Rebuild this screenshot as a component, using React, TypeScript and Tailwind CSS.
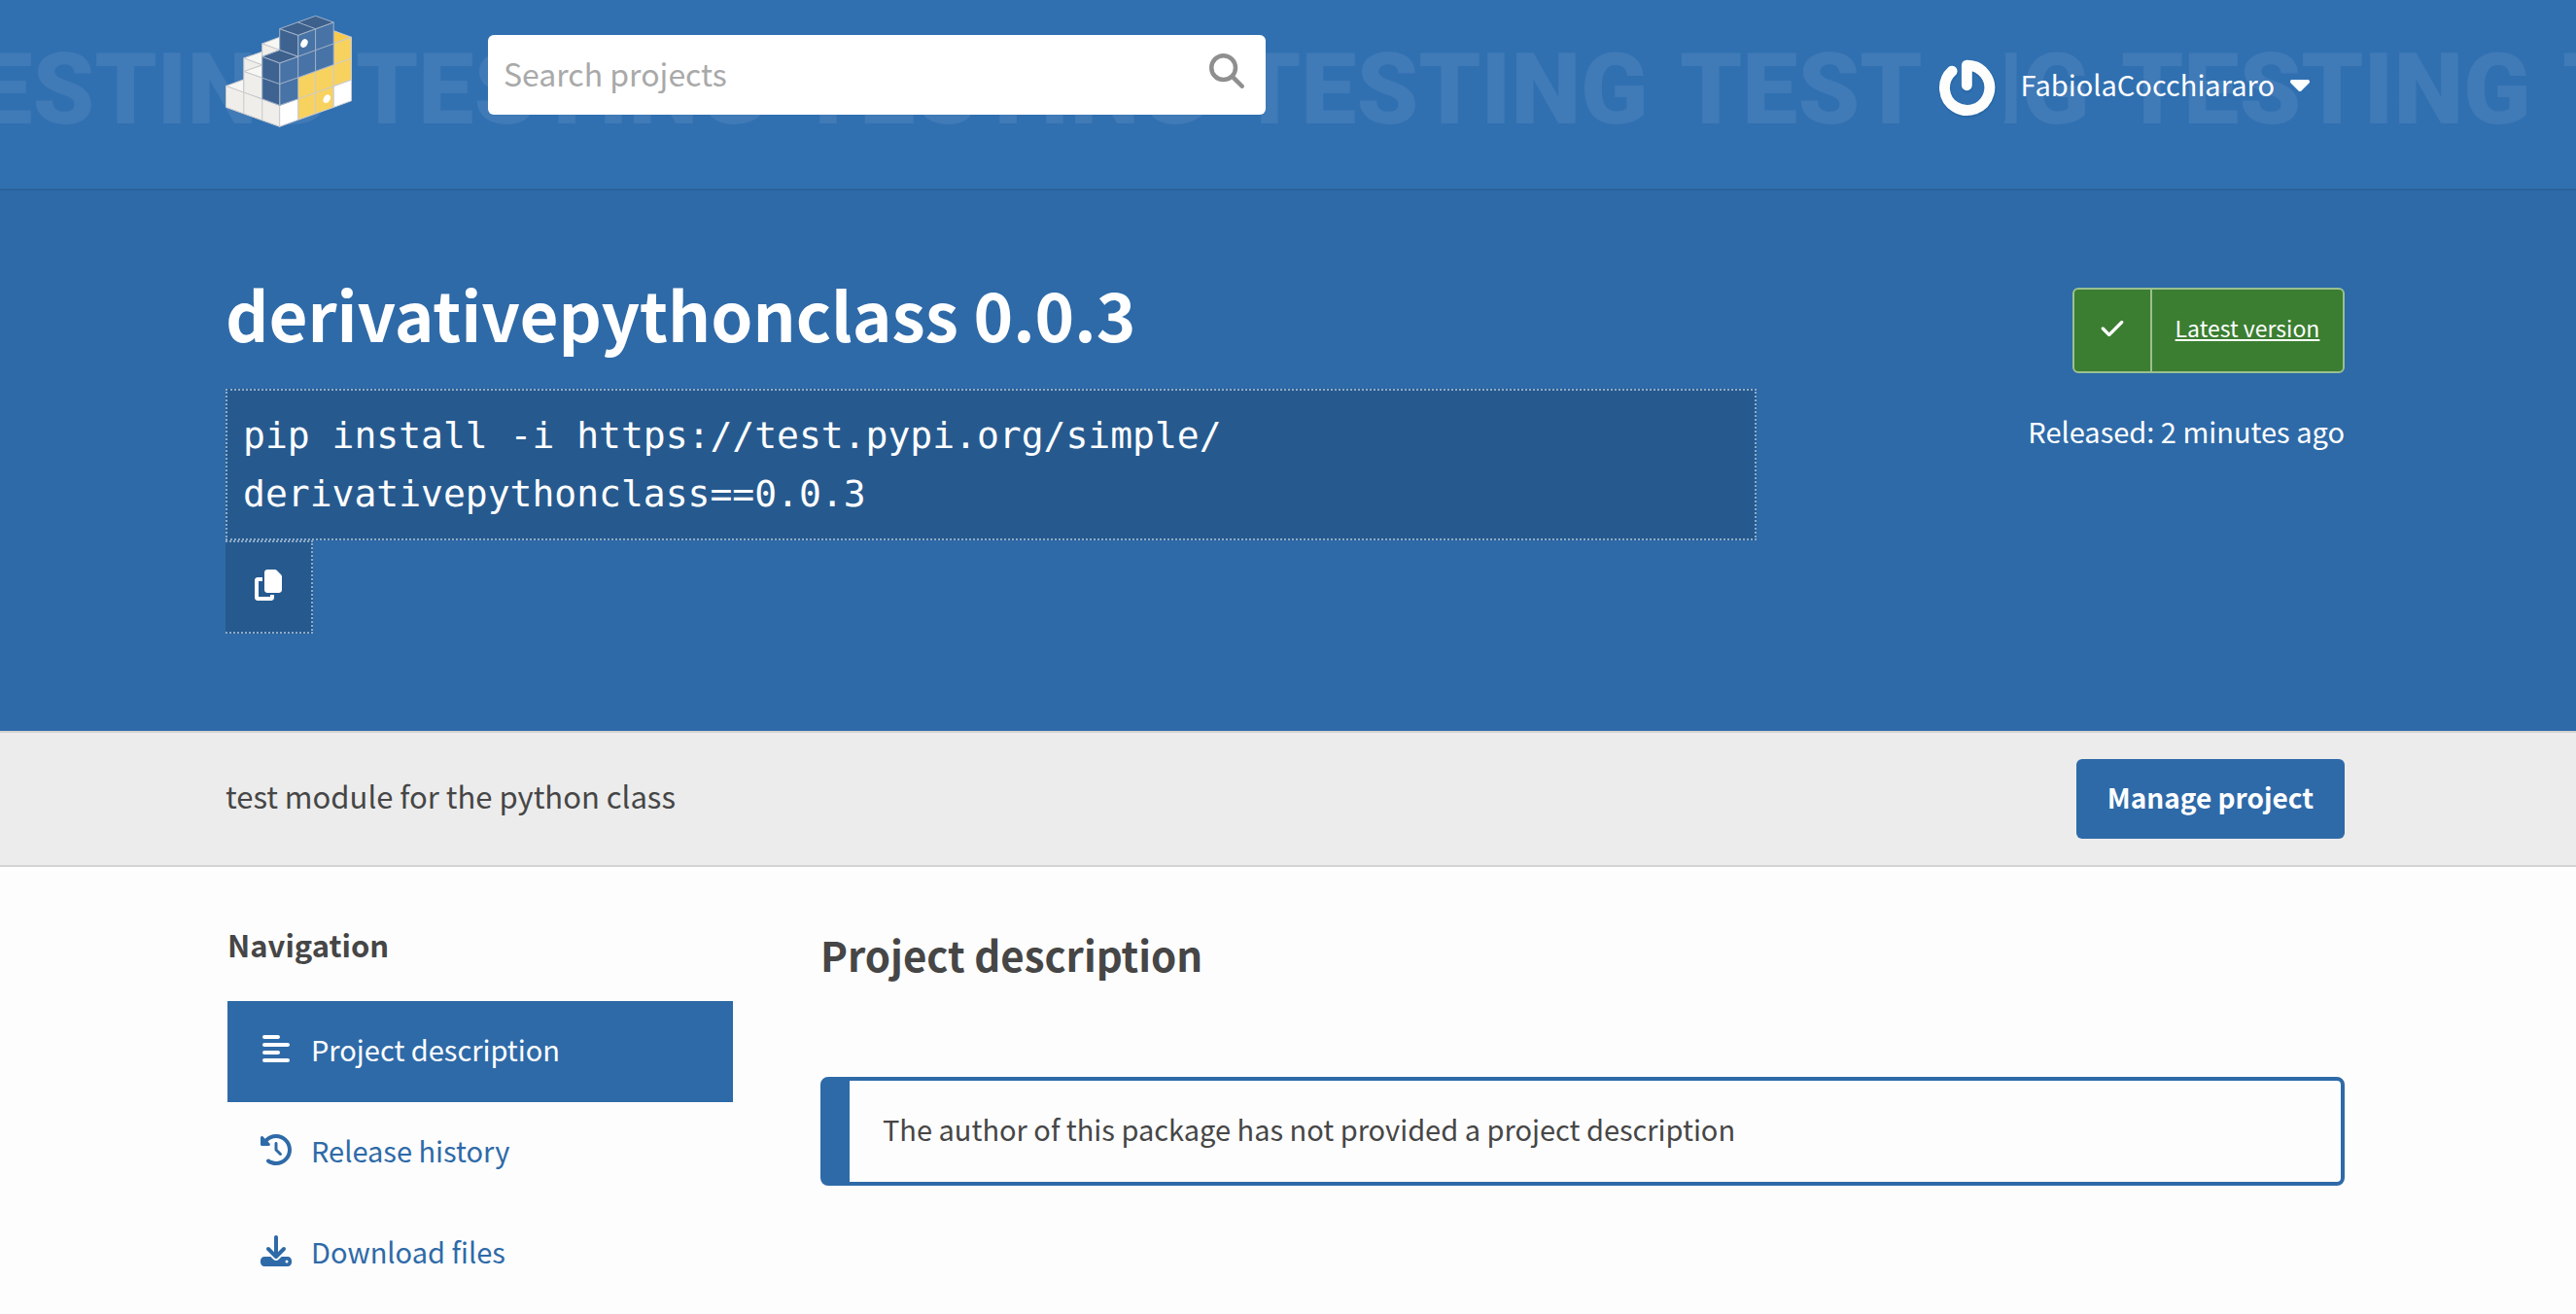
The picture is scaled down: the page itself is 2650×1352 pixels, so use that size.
import type { ReactNode } from "react";
import {
  FaAlignLeft,
  FaCaretDown,
  FaCheck,
  FaClockRotateLeft,
  FaCopy,
  FaDownload,
  FaMagnifyingGlass,
} from "react-icons/fa6";

function Container({ className, children }: { className: string; children: ReactNode }) {
  return (
    <div className="px-8 pr-[38px]">
      <div className={`mx-auto w-full max-w-[2180px] ${className}`}>{children}</div>
    </div>
  );
}

function Logo() {
  return (
    <svg viewBox="96 48 390 346" className="h-[115px] w-[130px]" strokeWidth="3" strokeLinejoin="round" aria-hidden="true">
      {/* white steps on the left */}
      <g stroke="#c9c9cd">
        <path fill="#f7f7f4" d="M209 135 263 115V155Z M152 180 209 160V201Z M152 221 209 201V241Z M97 266 152 246V287Z" />
        <path fill="#efeeea" d="M209 135 263 155 209 175Z M152 180 209 201 152 221Z" />
        <path fill="#efeeea" d="M152 221 209 241V306L152 287Z" />
        <path fill="#efeeea" d="M97 266 263 326V392L97 332Z" />
        <path fill="none" d="M152 287V352 M209 306V372" />
      </g>
      {/* right face */}
      <g stroke="#c9cbd2">
        <path fill="#f9cb4b" d="M430 95 485 115 430 135Z" />
        <path fill="#f8d25f" d="M320 240 430 200V135L485 115V247L430 267V332L320 371Z" />
        <path fill="#ffffff" d="M263 326 320 306V371L263 392Z M430 267 485 247V312L430 332Z" />
        <path fill="none" d="M320 306 430 267 M430 200 485 180 M374 220V352 M430 200V267" />
      </g>
      {/* blue blocks */}
      <g stroke="#a3b4ca">
        <path fill="#4873a6" d="M263 195 320 175V109L430 69V200L320 240V306L263 326Z" />
        <path fill="#3e6391" d="M209 175 263 195V326L209 306Z M263 89 320 109V175L263 155Z" />
        <path fill="#3d608c" d="M209 175 263 155 320 175 263 195Z M263 89 374 49 430 69 320 109Z" />
        <path fill="none" d="M320 69 374 89V220 M320 175V240 M209 241 263 260 320 240 M320 175 430 135" />
      </g>
      <ellipse cx="339" cy="134" rx="10" ry="14" fill="#fff" transform="rotate(28 339 134)" />
      <ellipse cx="409" cy="306" rx="10" ry="14" fill="#fff" transform="rotate(28 409 306)" />
    </svg>
  );
}

function Avatar() {
  return (
    <svg viewBox="28 28 242 242" className="size-20 rounded-lg bg-[#3070b1]" fill="none" strokeWidth="33" strokeLinecap="round" strokeLinejoin="round" aria-hidden="true">
      <path d="M150 142V80A70 70 0 1 1 104 98" stroke="#1f5a93" strokeOpacity="0.3" strokeWidth="39" transform="translate(1 4)" />
      <path d="M150 142V80A70 70 0 1 1 104 98" stroke="#fdfdfb" />
    </svg>
  );
}

const navItems = [
  { label: "Project description", Icon: FaAlignLeft, active: true },
  { label: "Release history", Icon: FaClockRotateLeft, active: false },
  { label: "Download files", Icon: FaDownload, active: false },
];

export default function App() {
  return (
    <div className="min-h-screen bg-[#fdfdfd] font-['Noto_Sans_CJK_JP','Noto_Sans',sans-serif] text-[29px] leading-[40px] text-[#464646]">
      <header className="relative overflow-hidden border-b-2 border-[#2a6299] bg-[#3070b1]">
        <div
          aria-hidden="true"
          className="absolute inset-x-0 top-0 -ml-[88px] flex h-[184px] items-center font-['Roboto',sans-serif] text-[102px] leading-none font-black text-[#407ab7] select-none"
        >
          {[0, 1, 2, 3, 4, 5, 6].map((n) => (
            <span key={n} className="w-[454px] shrink-0">TESTING</span>
          ))}
        </div>
        <div className="relative">
          <Container className="flex h-[194px] items-start pt-4">
            <a href="#" aria-label="PyPI home" className="mr-[140px] shrink-0">
              <Logo />
            </a>
            <form className="mt-5 flex h-[82px] max-w-[800px] flex-1 rounded-md bg-white" onSubmit={(e) => e.preventDefault()}>
              <label htmlFor="search" className="sr-only">Search PyPI</label>
              <input
                id="search"
                type="search"
                placeholder="Search projects"
                className="min-w-0 flex-1 bg-transparent pb-1 pl-4 text-[32px] outline-none placeholder:text-[#a9a9a9]"
              />
              <button type="submit" aria-label="Search" className="px-[22px] pb-2 text-[36px] text-[#8f8f8f]">
                <FaMagnifyingGlass />
              </button>
            </form>
            <button type="button" className="mt-[34px] mr-9 ml-auto flex items-center text-white">
              <Avatar />
              <span className="flex items-center gap-4 pb-2 pl-4">
                FabiolaCocchiararo
                <FaCaretDown className="h-8 w-5" />
              </span>
            </button>
          </Container>
        </div>
      </header>

      <section className="bg-[#2e6aa8] pt-[84px] pb-[100px] text-white">
        <Container className="flex justify-between gap-8">
          <div className="max-w-[1575px] flex-1">
            <h1 className="mb-9 text-[69px] leading-[84px] font-bold">derivativepythonclass 0.0.3</h1>
            <p className="border-2 border-dotted border-[#8fabc8] bg-[#265a8f] p-4 font-['DejaVu_Sans_Mono',monospace] text-[38px] leading-[60px]">
              pip install -i https://test.pypi.org/simple/ derivativepythonclass==0.0.3
            </p>
            <button
              type="button"
              aria-label="Copy PIP instructions"
              className="flex h-[96px] w-[90px] items-center justify-center border-2 border-l-0 border-dotted border-[#8fabc8] bg-[#265a8f] pb-1 text-[32px]"
            >
              <FaCopy />
            </button>
          </div>
          <div className="flex shrink-0 flex-col items-end pt-4">
            <a href="#" className="flex h-[88px] w-[280px] rounded-md border-2 border-[#9bc08f] bg-[#3b7e31] text-[23px]">
              <span className="flex w-20 items-center justify-center border-r-2 border-[#9bc08f] pb-1 text-[26px]">
                <FaCheck />
              </span>
              <span className="flex flex-1 items-center justify-center pb-1.5 underline decoration-2 underline-offset-2">Latest version</span>
            </a>
            <p className="mt-9 leading-[46px]">Released: 2 minutes ago</p>
          </div>
        </Container>
      </section>

      <section className="border-y-2 border-[#d3d3d3] bg-[#ececec] py-[27px]">
        <Container className="flex items-center justify-between">
          <p className="pb-1.5 text-[31px]">test module for the python class</p>
          <a href="#" className="flex h-[82px] items-center rounded-md bg-[#2e6aa8] px-8 pb-1 text-[28px] font-bold text-white">
            Manage project
          </a>
        </Container>
      </section>

      <main>
        <Container className="flex items-start gap-[90px] pl-0.5">
          <nav aria-labelledby="nav-title" className="w-[520px] shrink-0 pt-14">
            <h2 id="nav-title" className="mb-[34px] text-[31px] leading-[48px] font-bold">Navigation</h2>
            <ul>
              {navItems.map(({ label, Icon, active }) => (
                <li key={label}>
                  <a
                    href="#"
                    className={
                      active
                        ? "flex h-[104px] items-center gap-5 bg-[#2e6aa8] pb-1.5 pl-[34px] text-white"
                        : "flex h-[104px] items-center gap-5 pb-1.5 pl-[34px] text-[#2e6aa8]"
                    }
                  >
                    <Icon className="h-8 w-8" />
                    {label}
                  </a>
                </li>
              ))}
            </ul>
          </nav>
          <article className="min-w-0 flex-1 pt-[60px]">
            <h2 className="mb-24 text-[42px] leading-[60px] font-bold">Project description</h2>
            <div className="rounded-lg border-4 border-l-[30px] border-[#2e6aa8] pt-[29px] pb-[35px] pl-[34px]">
              <p>The author of this package has not provided a project description</p>
            </div>
          </article>
        </Container>
      </main>
    </div>
  );
}
